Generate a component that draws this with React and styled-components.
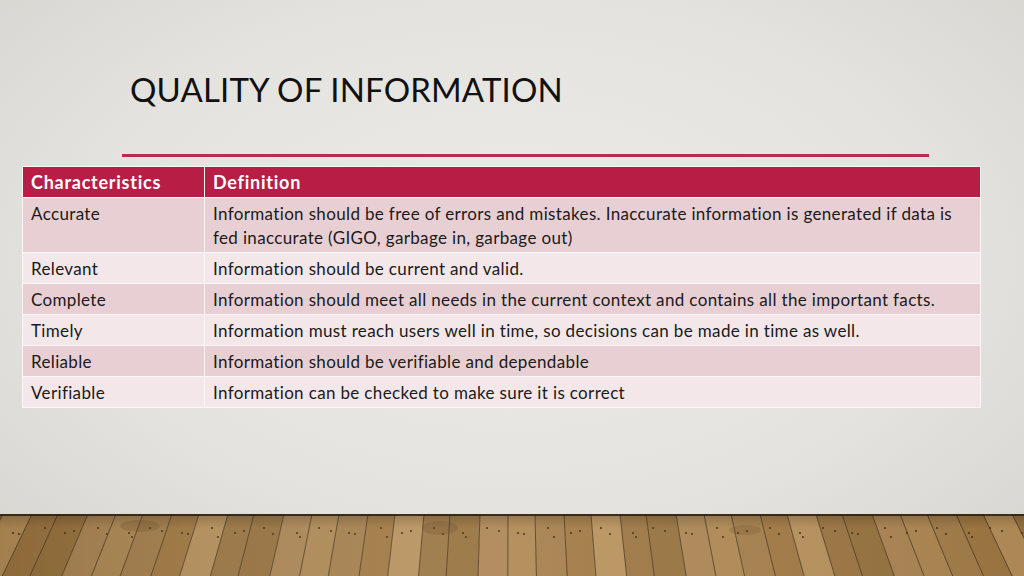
import React from "react";
import styled, { createGlobalStyle } from "styled-components";

const GlobalStyle = createGlobalStyle`
  html, body {
    margin: 0;
    padding: 0;
  }
  body {
    font-family: "Lato", "Open Sans", sans-serif;
    font-variant-ligatures: none;
  }
`;

const rows = [
  {
    name: "Accurate",
    text: "Information should be free of errors and mistakes. Inaccurate information is generated if data is fed inaccurate (GIGO, garbage in, garbage out)",
  },
  { name: "Relevant", text: "Information should be current and valid." },
  {
    name: "Complete",
    text: "Information should meet all needs in the current context and contains all the important facts.",
  },
  {
    name: "Timely",
    text: "Information must reach users well in time, so decisions can be made in time as well.",
  },
  { name: "Reliable", text: "Information should be verifiable and dependable" },
  { name: "Verifiable", text: "Information can be checked to make sure it is correct" },
];

const Slide = styled.div`
  width: 1024px;
  height: 576px;
  overflow: hidden;
  display: flex;
  flex-direction: column;
  background: radial-gradient(
    ellipse 75% 80% at 50% 45%,
    #ecebe7 0%,
    #e4e3df 55%,
    #d4d3ce 100%
  );
`;

const Content = styled.div`
  flex: 1;
  display: flex;
  flex-direction: column;
`;

const Title = styled.h1`
  margin: 0;
  padding: 70px 0 0 130px;
  font-size: 33px;
  font-weight: 400;
  line-height: 38px;
  color: #111;
  letter-spacing: 0.15px;
`;

const Rule = styled.div`
  margin: 46px 0 0 122px;
  width: 807px;
  height: 3px;
  background: #c0284f;
`;

const Table = styled.div`
  margin: 9px 0 0 22px;
  width: 957px;
  display: grid;
  grid-template-columns: 181px 1fr;
  gap: 1px;
  padding: 1px;
  background: #fbf7f7;
  font-size: 17px;
  letter-spacing: 0.35px;
  color: #1a1a1a;
`;

const HeadCell = styled.div`
  background: #b81e45;
  color: #fff;
  font-weight: 700;
  font-size: 18px;
  letter-spacing: 0.75px;
  padding: 3px 8px 3px 8px;
  line-height: 24px;
`;

const Cell = styled.div`
  background: ${(p) => (p.$dark ? "#e8cfd3" : "#f3e7e9")};
  padding: 4px 8px 2px 8px;
  line-height: 24px;
`;

const Floor = styled.svg`
  display: block;
  width: 1024px;
  height: 62px;
  flex-shrink: 0;
`;

function WoodFloor() {
  const cx = 512;
  const h = 62;
  const d = 1000;
  const planks = [];
  const shades = ["#a27a44", "#b08a55", "#98733f", "#b9935e", "#a6804d", "#ad8756", "#9d7744"];
  const widths = [27, 29, 26, 30, 28, 27, 29];
  let i = 0;
  for (let x = -24; x < 1060; ) {
    const step = widths[i % widths.length];
    const k = (d + h) / d;
    const x1 = x;
    const x2 = x + step;
    const b1 = cx + (x1 - cx) * k;
    const b2 = cx + (x2 - cx) * k;
    planks.push(
      <g key={x}>
        <polygon
          points={`${x1},0 ${x2},0 ${b2},${h} ${b1},${h}`}
          fill={shades[(i * 3) % shades.length]}
        />
        <line x1={x1} y1={0} x2={b1} y2={h} stroke="#3d2a14" strokeWidth="1" opacity="0.75" />
        <circle cx={x1 + 7 + (i % 3) * 3} cy={14 + (i % 2) * 5} r="1.1" fill="#4a3218" />
        <circle cx={x1 + 19 - (i % 2) * 3} cy={17 + (i % 3) * 3} r="1.1" fill="#4a3218" />
      </g>
    );
    x += step;
    i++;
  }
  return (
    <Floor viewBox="0 0 1024 62" preserveAspectRatio="none">
      <defs>
        <linearGradient id="shade" x1="0" y1="0" x2="0" y2="1">
          <stop offset="0" stopColor="#000" stopOpacity="0.18" />
          <stop offset="1" stopColor="#000" stopOpacity="0" />
        </linearGradient>
        <linearGradient id="grain" x1="0" y1="0" x2="1" y2="0">
          <stop offset="0" stopColor="#4a300f" stopOpacity="0.2" />
          <stop offset="0.5" stopColor="#fff" stopOpacity="0.06" />
          <stop offset="1" stopColor="#4a300f" stopOpacity="0.12" />
        </linearGradient>
      </defs>
      {planks}
      <ellipse cx="140" cy="12" rx="20" ry="6" fill="#5a3a15" opacity="0.22" />
      <ellipse cx="440" cy="14" rx="18" ry="7" fill="#5a3a15" opacity="0.22" />
      <ellipse cx="745" cy="16" rx="16" ry="5" fill="#5a3a15" opacity="0.18" />
      <rect x="0" y="0" width="1024" height="62" fill="url(#grain)" />
      <rect x="0" y="0" width="1024" height="14" fill="url(#shade)" />
      <rect x="0" y="0" width="1024" height="2" fill="#2e1f0e" opacity="0.85" />
    </Floor>
  );
}

export default function App() {
  return (
    <>
      <GlobalStyle />
      <Slide>
        <Content>
          <Title>QUALITY OF INFORMATION</Title>
          <Rule />
          <Table>
            <HeadCell>Characteristics</HeadCell>
            <HeadCell>Definition</HeadCell>
            {rows.map((r, idx) => (
              <React.Fragment key={r.name}>
                <Cell $dark={idx % 2 === 0}>{r.name}</Cell>
                <Cell $dark={idx % 2 === 0}>{r.text}</Cell>
              </React.Fragment>
            ))}
          </Table>
        </Content>
        <WoodFloor />
      </Slide>
    </>
  );
}
